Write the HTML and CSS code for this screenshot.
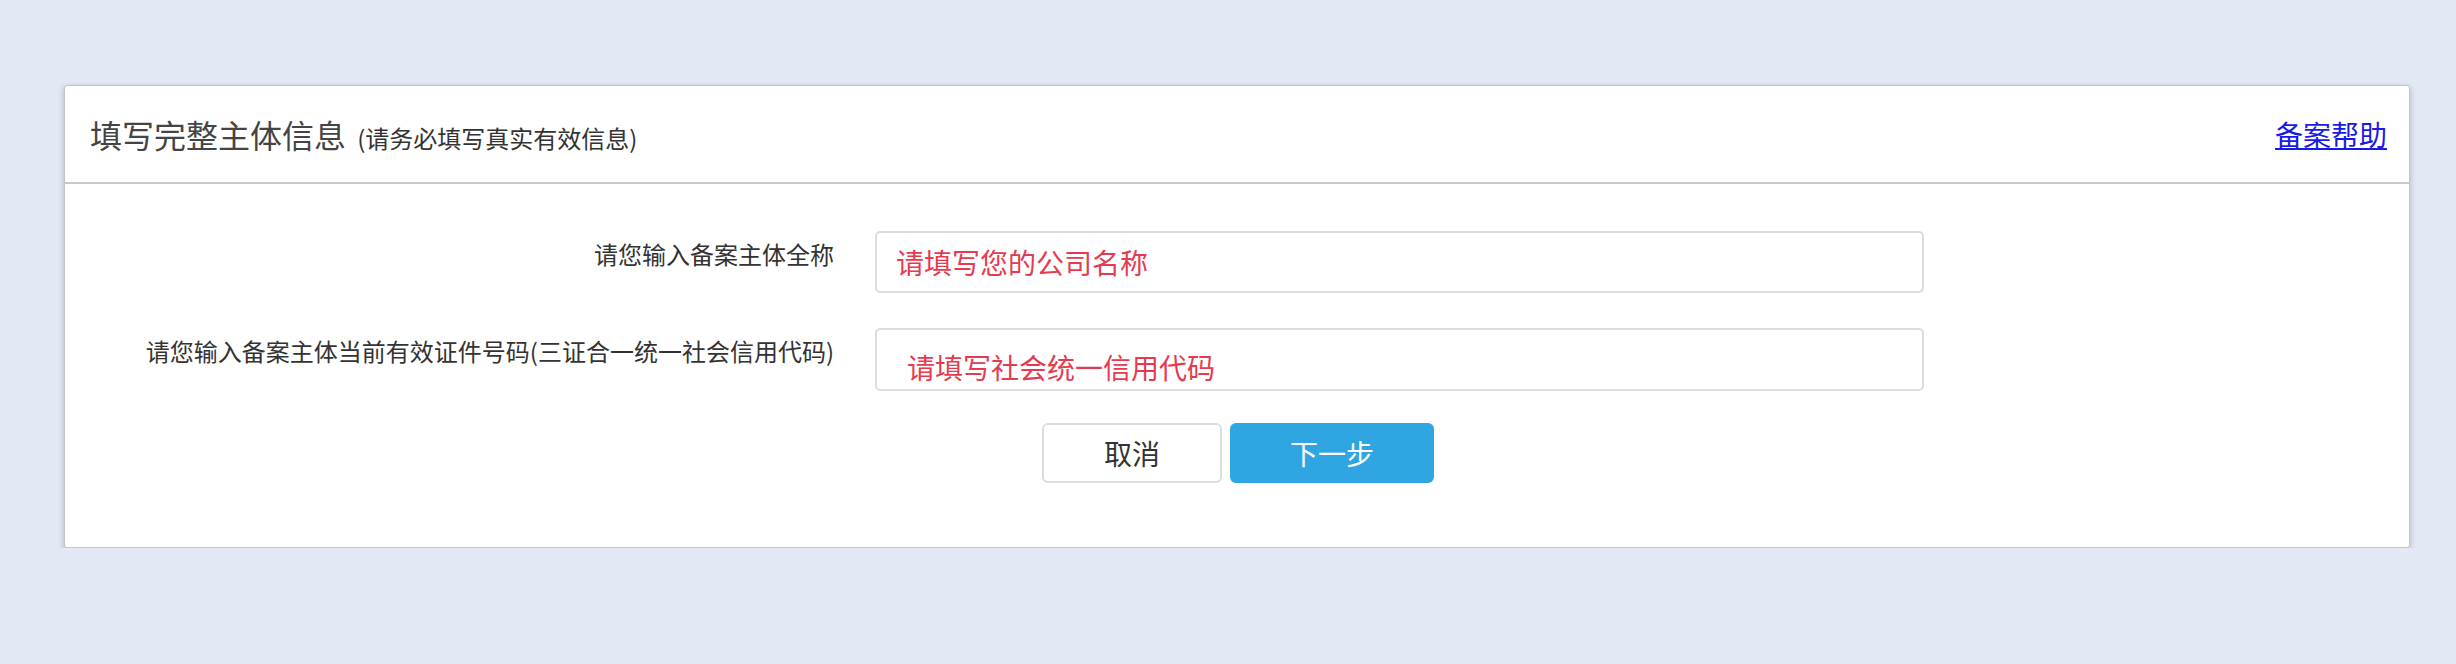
FILE: index.html
```html
<!DOCTYPE html>
<html lang="zh-CN">
<head>
  <meta charset="UTF-8" />
  <meta name="viewport" content="width=device-width, initial-scale=1.0" />
  <title>填写完整主体信息</title>

  <link rel="stylesheet" href="styles.css">
</head>
<body>
<div class="page">
  <div class="card">
    <!-- Header -->
    <div class="card-header">
      <h2 class="title">填写完整主体信息 <small>(请务必填写真实有效信息)</small></h2>
      <a href="#" class="help-link">备案帮助</a>
    </div>

    <!-- Form -->
    <form class="card-body" id="subjectForm">
      <div class="form-row">
        <label for="companyName">请您输入备案主体全称</label>
        <input type="text" id="companyName" class="field" placeholder="请填写您的公司名称" />
      </div>

      <div class="form-row">
        <label for="creditCode">请您输入备案主体当前有效证件号码(三证合一统一社会信用代码)</label>
        <input type="text" id="creditCode" class="field field-low" placeholder="请填写社会统一信用代码" />
      </div>

      <div class="actions">
        <button type="button" class="btn btn-cancel">取消</button>
        <button type="button" class="btn btn-next">下一步</button>
      </div>
    </form>
  </div>
</div>
</body>
</html>
```

FILE: styles.css
```css
body {
  font-family: "Noto Sans CJK SC", "Noto Sans", sans-serif;
  background-color: #e2e8f4;
  margin: 0;
  padding: 0;
  color: #333;
}

.page {
  padding: 85px 46px 0 64px;
}

.card {
  background-color: #fff;
  border: 1px solid #c2c4c8;
  border-radius: 3px;
  box-shadow: 0 2px 6px rgba(0, 0, 0, 0.22);
}

.card-header {
  display: flex;
  align-items: center;
  justify-content: space-between;
  height: 96px;
  padding: 0 22px 0 25px;
  border-bottom: 2px solid #c9c9cb;
}

.title {
  margin: 0;
  font-size: 32px;
  font-weight: normal;
  color: #444;
}

.title small {
  font-size: 24px;
  color: #333;
  margin-left: 4px;
}

.help-link {
  font-size: 28px;
  color: #1a1ae6;
  text-decoration: underline;
}

.card-body {
  padding: 47px 0 64px;
}

.form-row {
  display: grid;
  grid-template-columns: 769px 1049px;
  column-gap: 41px;
  align-items: start;
  margin-bottom: 35px;
}

.form-row label {
  text-align: right;
  font-size: 24px;
  line-height: 36px;
  padding-top: 5px;
  color: #333;
}

.field {
  height: 62px;
  padding: 0 19px;
  border: 2px solid #dcdcdc;
  border-radius: 5px;
  box-sizing: border-box;
  font-family: inherit;
  font-size: 28px;
  outline: none;
}

.field::placeholder {
  color: #e63a50;
  opacity: 1;
}

.field-low {
  height: 63px;
  padding: 15px 30px 0;
}

.actions {
  display: flex;
  justify-content: center;
  gap: 8px;
  margin-top: -3px;
  padding-left: 2px;
}

.btn {
  height: 60px;
  font-family: inherit;
  font-size: 28px;
  border-radius: 6px;
  cursor: pointer;
}

.btn-cancel {
  width: 180px;
  background-color: #fff;
  color: #333;
  border: 2px solid #dcdcdc;
}

.btn-next {
  width: 204px;
  background-color: #2fa6e1;
  color: #fff;
  border: none;
}
```
